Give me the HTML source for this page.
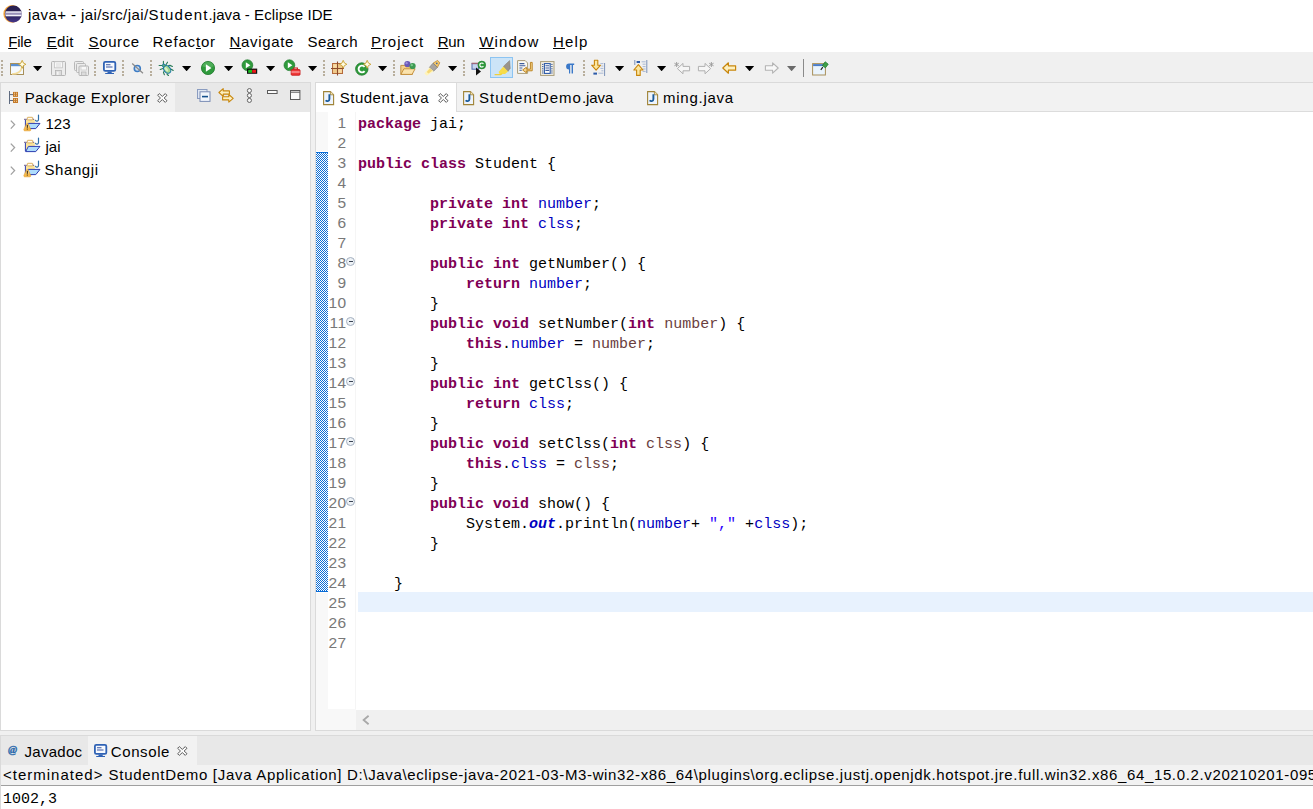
<!DOCTYPE html>
<html lang="en">
<head>
<meta charset="utf-8">
<title>java+ - jai/src/jai/Student.java - Eclipse IDE</title>
<style>
*{box-sizing:border-box;margin:0;padding:0}
html,body{width:1313px;height:809px;overflow:hidden;background:#f0f0f0}
body{position:relative;font-family:"Liberation Sans",sans-serif;font-size:15px;color:#000}
.abs{position:absolute}
.t{position:absolute;white-space:pre;line-height:20px;height:20px}
#title{left:0;top:0;width:1313px;height:29px;background:#fff}
#menu{left:0;top:29px;width:1313px;height:23px;background:#fff}
#menu .t u{text-decoration:underline;text-underline-offset:1px;text-decoration-thickness:1px}
#tool{left:0;top:52px;width:1313px;height:30px;background:#f0f0f0}
.sep{position:absolute;width:2px;height:16px;top:8px;background:repeating-linear-gradient(to bottom,#b8ae9c 0,#b8ae9c 2px,transparent 2px,transparent 3.5px)}
.dd{position:absolute;top:13.700px;margin-left:-.2px;width:9.600px;height:5.600px;background:#000;clip-path:polygon(0 0,100% 0,50% 100%)}
svg{position:absolute;overflow:visible}
/* panels */
#left{left:0;top:82px;width:311px;height:649px;background:#fff;border:1px solid #dadada}
.tr{line-height:23px!important;height:23px!important}
#left .hdr{left:0;top:0;width:309px;height:29px;background:#e8e8e8}
#left .hdr .act{left:0;top:0;width:174px;height:29px;background:#f2f2f2}
#ed{left:315px;top:82px;width:998px;height:649px;background:#fff;border:1px solid #dadada;border-right:0}
#ed .hdr{left:0;top:0;width:997px;height:29px;background:#f2f2f2;border-bottom:1px solid #dcdcdc}
#ed .hdr .act{left:0;top:0;width:141px;height:29px;background:#fff;border-right:1px solid #dcdcdc}
#ruler{left:0;top:29px;width:12px;height:618px;background:#f8f8f8}
#hatch{left:0;top:68px;width:12px;height:442px;background-color:#fff;background-image:conic-gradient(#0a6cd6 25%,#fff 0 50%,#0a6cd6 0 75%,#fff 0);background-size:2px 2px;background-position:0 1px;border-top:1px solid #fff;border-bottom:1px solid #fff;box-shadow:inset 0 1px 0 #0a6cd6,inset 0 -1px 0 #0a6cd6}
#lnsep{left:39px;top:29px;width:1px;height:598px;background:#f5f5f5}
#hscroll{left:40px;top:627px;width:957px;height:20px;background:#f0f0f0}
#lnbot{left:12px;top:626px;width:28px;height:21px;background:#f8f8f8}
#cur{left:42px;top:509px;width:955px;height:20px;background:#e8f2fe}
.code{font-family:"Liberation Mono",monospace;font-size:15px}
.ln{position:absolute;left:0;margin-top:1px;width:30.400px;text-align:right;color:#787878;font-family:"Liberation Sans",sans-serif;font-size:15.500px;letter-spacing:0.38px;line-height:20px;height:20px;white-space:pre}
.cl{position:absolute;left:42px;margin-top:3px;font-family:"Liberation Mono",monospace;font-size:15px;line-height:20px;height:20px;white-space:pre;color:#000}
.k{color:#7f0055;font-weight:bold}
.f{color:#0000c0}
.p{color:#6a3e3e}
.s{color:#2a00ff}
.sf{color:#0000c0;font-weight:bold;font-style:italic}
.fold{position:absolute;left:30px;margin-top:-1px;width:9px;height:9px;border:1px solid #a4b0c0;border-radius:50%;background:#eef2f6}
.fold:after{content:"";position:absolute;left:1.500px;top:3px;width:4px;height:1px;background:#3a4454}
#bot{left:0;top:735px;width:1313px;height:74px;background:#fff;border-top:1px solid #dadada;border-left:1px solid #dadada}
#bot .hdr{left:0;top:0;width:1312px;height:29px;background:#e8e8e8}
#bot .hdr .act{left:87px;top:0;width:109px;height:29px;background:#f2f2f2}
#bot .desc{left:0;top:29px;width:1312px;height:21px;background:#f2f2f2;border-bottom:1px solid #a0a0a0}
</style>
</head>
<body>
<!-- TITLE BAR -->
<div id="title" class="abs">
  <svg id="eclipse" style="left:3px;top:5px" width="19" height="18" viewBox="0 0 19 18"><defs><clipPath id="ec"><circle cx="10.300" cy="8.900" r="8.500"/></clipPath><linearGradient id="eg" x1="0" y1="0" x2="0" y2="1"><stop offset="0" stop-color="#2a2050"/><stop offset=".55" stop-color="#2c2258"/><stop offset="1" stop-color="#45378a"/></linearGradient></defs><circle cx="9.200" cy="8.900" r="8.800" fill="#f2a23a"/><circle cx="10.300" cy="8.900" r="8.500" fill="url(#eg)"/><g clip-path="url(#ec)"><rect x="2.500" y="6.300" width="17" height="5" fill="#f4f2fa"/><rect x="2.500" y="7.700" width="17" height="2.100" fill="#9890b8"/></g></svg>
  <div class="t" id="ttl" style="left:28.0px;top:5px;letter-spacing:0.42px">java+ - jai/src/jai/<span style="letter-spacing:1.19px">Student</span><span style="letter-spacing:0.06px">.java - </span><span style="letter-spacing:0.1px">Eclipse IDE</span></div>
</div>
<!-- MENU BAR -->
<div id="menu" class="abs">
  <div class="t" id="m1" style="left:8.2px;top:3px;letter-spacing:-0.20px"><u>F</u>ile</div>
  <div class="t" id="m2" style="left:46.8px;top:3px;letter-spacing:0.27px"><u>E</u>dit</div>
  <div class="t" id="m3" style="left:88.6px;top:3px;letter-spacing:0.60px"><u>S</u>ource</div>
  <div class="t" id="m4" style="left:152.6px;top:3px;letter-spacing:0.83px">Refac<u>t</u>or</div>
  <div class="t" id="m5" style="left:229.6px;top:3px;letter-spacing:0.66px"><u>N</u>avigate</div>
  <div class="t" id="m6" style="left:307.4px;top:3px;letter-spacing:0.52px">Se<u>a</u>rch</div>
  <div class="t" id="m7" style="left:371.0px;top:3px;letter-spacing:0.93px"><u>P</u>roject</div>
  <div class="t" id="m8" style="left:437.8px;top:3px;letter-spacing:-0.30px"><u>R</u>un</div>
  <div class="t" id="m9" style="left:479.2px;top:3px;letter-spacing:1.16px"><u>W</u>indow</div>
  <div class="t" id="m10" style="left:553.0px;top:3px;letter-spacing:1.14px"><u>H</u>elp</div>
</div>
<!-- TOOLBAR -->
<div id="tool" class="abs">
<!--TOOLICONS-->
  <div class="sep" style="left:1px"></div>
  <!-- new -->
  <svg style="left:10px;top:8px" width="16" height="16" viewBox="0 0 16 16"><rect x=".5" y="3.5" width="13" height="11" fill="#f4f9fe" stroke="#a8905a"/><rect x="1" y="4" width="12" height="2.2" fill="#5a8fd0"/><path d="M2 14c5 0 9-2 10-7" stroke="#f3dc9a" stroke-width="1.6" fill="none"/><path d="M12.200.3l1.200 2.700 2.500 1.300-2.500 1.300-1.200 2.700L11 5.600 8.500 4.300 11 3z" fill="#fffbe0" stroke="#c9a132" stroke-width=".9" stroke-linejoin="round"/></svg>
  <div class="dd" style="left:33px"></div>
  <!-- save -->
  <svg style="left:51px;top:9px" width="15" height="15" viewBox="0 0 15 15"><path d="M1.5.5h12a1 1 0 011 1v12a1 1 0 01-1 1h-12a1 1 0 01-1-1v-12a1 1 0 011-1z" fill="#ececec" stroke="#b4b4b4"/><rect x="3.5" y=".8" width="8" height="6" fill="#f8f8f8" stroke="#c4c4c4" stroke-width=".8"/><path d="M5 3h5M5 5h5" stroke="#d0d0d0" stroke-width=".8"/><rect x="4.5" y="9.5" width="6" height="5" fill="#dcdcdc" stroke="#b4b4b4" stroke-width=".8"/><rect x="6" y="10.8" width="1.6" height="3" fill="#f4f4f4"/></svg>
  <!-- save all -->
  <svg style="left:74px;top:9px" width="16" height="15" viewBox="0 0 16 15"><rect x=".5" y=".5" width="9" height="9" rx="1" fill="#ececec" stroke="#b8b8b8"/><rect x="2.5" y="2.5" width="9" height="9" rx="1" fill="#ececec" stroke="#b8b8b8"/><rect x="5" y="5" width="9.5" height="9.5" rx="1" fill="#ececec" stroke="#b4b4b4"/><rect x="7" y="5.4" width="5.6" height="3.6" fill="#f8f8f8" stroke="#c8c8c8" stroke-width=".7"/><rect x="7.6" y="11" width="4.4" height="3.4" fill="#dcdcdc" stroke="#b4b4b4" stroke-width=".7"/></svg>
  <div class="sep" style="left:94px"></div>
  <!-- console/monitor -->
  <svg style="left:103px;top:9px" width="14" height="14" viewBox="0 0 14 14"><rect x=".9" y=".9" width="11.4" height="9" rx="1.4" fill="#f6f9fe" stroke="#2f62b5" stroke-width="1.8"/><path d="M3 3.8h4.5M3 6h6.5" stroke="#3a56a0" stroke-width="1.1"/><path d="M4.5 10.5h4.2v1.4h2.3v1.2h-8.8v-1.2h2.3z" fill="#2f62b5"/></svg>
  <div class="sep" style="left:122px"></div>
  <!-- skip breakpoints -->
  <svg style="left:131px;top:10px" width="13" height="13" viewBox="0 0 13 13"><circle cx="6.3" cy="6.5" r="3" fill="#cfe0f3" stroke="#3d7cc4" stroke-width="1.6"/><path d="M1.2 1.5l10.8 9.7" stroke="#8a8a8a" stroke-width="1.2"/></svg>
  <div class="sep" style="left:150px"></div>
  <!-- debug bug -->
  <svg style="left:158px;top:8px" width="16" height="16" viewBox="0 0 16 16"><g stroke="#2a7a56" stroke-width="1.100" fill="none" stroke-linecap="round"><path d="M5.400 4V1.200M8 4.800l1.500-2.600M4.200 5.500H1.100M5 8.600L2.200 9.500M10.600 5.600l1.500-.2 2.300 1.100M12.100 9.400h1.400l1.700 1.100M6.100 11.200l-.6 1.400.9 2.100M9.100 13.200l.1 1.200 1.300 1.100"/></g><ellipse cx="9.100" cy="9.300" rx="3.100" ry="4.400" fill="#a4d68c" stroke="#1a7aa8" stroke-width="1.100" transform="rotate(-40 9.100 9.300)"/><ellipse cx="8.500" cy="8.700" rx="1.300" ry="2.600" fill="#d8f0c8" transform="rotate(-40 9.100 9.300)"/><circle cx="5.800" cy="5.600" r="1.500" fill="#6ab06a" stroke="#1a7aa8" stroke-width="1"/></svg>
  <div class="dd" style="left:182px"></div>
  <!-- run -->
  <svg style="left:201px;top:9px" width="14" height="14" viewBox="0 0 14 14"><circle cx="7" cy="7" r="6.6" fill="#2f9a3c" stroke="#1f7a2c" stroke-width=".8"/><path d="M7 .9a6.1 6.1 0 00-5.8 4.3c3 1.5 8.6 1.5 11.6 0A6.1 6.1 0 007 .9z" fill="#5db765" opacity=".7"/><path d="M4.9 3.3l5.6 3.7-5.6 3.7z" fill="#fff"/></svg>
  <div class="dd" style="left:224px"></div>
  <!-- coverage -->
  <svg style="left:241px;top:7px" width="17" height="16" viewBox="0 0 17 16"><circle cx="6.4" cy="6.2" r="5.4" fill="#2f9a3c" stroke="#1f7a2c" stroke-width=".7"/><path d="M4.8 3.2l4.6 3-4.6 3z" fill="#fff"/><rect x="6" y="9.6" width="10.2" height="5.2" fill="#111"/><rect x="7.2" y="10.8" width="3.8" height="3" fill="#18c020"/><rect x="11.2" y="10.8" width="3.8" height="3" fill="#e81818"/></svg>
  <div class="dd" style="left:266px"></div>
  <!-- external tools -->
  <svg style="left:283px;top:7px" width="18" height="17" viewBox="0 0 18 17"><circle cx="6.4" cy="6.2" r="5.4" fill="#2f9a3c" stroke="#1f7a2c" stroke-width=".7"/><path d="M4.8 3.2l4.6 3-4.6 3z" fill="#fff"/><rect x="8.2" y="10.6" width="8.8" height="5.6" rx=".8" fill="#f03a3a" stroke="#c81818" stroke-width=".9"/><path d="M10.8 10.4V9h3.6v1.4" fill="none" stroke="#c81818" stroke-width="1.1"/><path d="M8.4 13h8.4" stroke="#ffd0d0" stroke-width=".9"/></svg>
  <div class="dd" style="left:308px"></div>
  <div class="sep" style="left:323px"></div>
  <!-- new package -->
  <svg style="left:331px;top:8px" width="16" height="16" viewBox="0 0 16 16"><rect x="1.5" y="3.5" width="10" height="10" fill="#f0c98a" stroke="#b46a3c"/><path d="M6.5 1.5v14M0 8.5h13" stroke="#8c4a2a" stroke-width="1.1"/><rect x="2.4" y="4.4" width="3.3" height="3.3" fill="#f8dba6"/><rect x="7.4" y="9.4" width="3.3" height="3.3" fill="#f8dba6"/><path d="M12.200.3l1.200 2.700 2.500 1.300-2.500 1.300-1.200 2.700L11 5.600 8.500 4.300 11 3z" fill="#fffbe0" stroke="#c9a132" stroke-width=".9" stroke-linejoin="round"/></svg>
  <!-- new class -->
  <svg style="left:355px;top:8px" width="16" height="16" viewBox="0 0 16 16"><circle cx="6.8" cy="9" r="6.2" fill="#2f9a3c" stroke="#1f7a2c" stroke-width=".8"/><path d="M9.6 6.8A3.4 3.4 0 106.9 12.4a3.4 3.4 0 002.7-1.3" fill="none" stroke="#fff" stroke-width="1.9"/><path d="M12.200.3l1.200 2.700 2.500 1.300-2.500 1.300-1.200 2.700L11 5.600 8.500 4.300 11 3z" fill="#fffbe0" stroke="#c9a132" stroke-width=".9" stroke-linejoin="round"/></svg>
  <div class="dd" style="left:378px"></div>
  <div class="sep" style="left:393px"></div>
  <!-- open type -->
  <svg style="left:400px;top:8px" width="17" height="16" viewBox="0 0 17 16"><path d="M.8 5.4h4l1.2 1.4h6.4v7.6H.8z" fill="#f5d08a" stroke="#c08a36" stroke-width=".9"/><path d="M.9 14.4l3-5.6h11.2l-3 5.6z" fill="#fbe3ac" stroke="#c08a36" stroke-width=".9"/><circle cx="7.4" cy="4" r="3.1" fill="#6a58b8"/><circle cx="6.6" cy="3.1" r="1.2" fill="#9c8edc"/><circle cx="12.6" cy="6" r="3.1" fill="#3d9a52"/><circle cx="11.8" cy="5.1" r="1.2" fill="#7cc88c"/></svg>
  <!-- search torch -->
  <svg style="left:424px;top:8px" width="16" height="16" viewBox="0 0 16 16"><path d="M9 3.200L13.600.4l2.200 2.400-2.400 4.600z" fill="#f2c76a" stroke="#c08a36" stroke-width=".8"/><circle cx="12.800" cy="3.400" r=".8" fill="#3a62a8"/><path d="M5.400 7.400l3.600-4.200 4.400 4.200-3.800 3.800z" fill="#a8a4a0" stroke="#807c78" stroke-width=".7"/><path d="M.4 13.600l5-6.200 4.200 3.800-6.800 4.600z" fill="#fff4bc"/><path d="M2.800 12l3.200-3.800 2.600 2.400-4.200 3z" fill="#f6d878"/></svg>
  <div class="dd" style="left:448px"></div>
  <div class="sep" style="left:463px"></div>
  <!-- toggle breadcrumb -->
  <svg style="left:471px;top:8px" width="16" height="16" viewBox="0 0 16 16"><rect x="1" y="3.6" width="6.6" height="5.6" fill="#c6d4ee" stroke="#5068a8" stroke-width="1"/><path d="M.6 3.4h7.4" stroke="#a06878" stroke-width="1.4"/><path d="M5 7.6l5 4-5 4z" fill="#111"/><circle cx="10.8" cy="5" r="3.9" fill="#2f9a3c" stroke="#1f7a2c" stroke-width=".6"/><path d="M12.4 3.8a2 2 0 100 2.4" fill="none" stroke="#fff" stroke-width="1.1"/></svg>
  <!-- mark occurrences (toggled) -->
  <div class="abs" style="left:490px;top:5px;width:23px;height:21px;background:#cce4f7;border:1px solid #8cc4f2"></div>
  <svg style="left:494px;top:8px" width="17" height="16" viewBox="0 0 17 16"><path d="M9.4 6.4L15.6.6l.6 7.6-2.2 3.2z" fill="#9a948a" stroke="#7c766c" stroke-width=".5"/><path d="M4.6 12l4.8-5.6 4.6 5-3 2.6H5.6z" fill="#f7dc4a"/><path d="M.6 14.6h6l1.4-.8" stroke="#f0cf3a" stroke-width="1.2" fill="none"/></svg>
  <!-- word wrap -->
  <svg style="left:517px;top:8px" width="16" height="15" viewBox="0 0 16 15"><path d="M.6.6h7.6l2.4 2.4v10.4H.6z" fill="#fbfaf4" stroke="#a89c78" stroke-width="1"/><path d="M2.4 3.6h5M2.4 5.8h6M2.4 8h3M2.4 10.2h2.4" stroke="#3c5c9c" stroke-width="1.1"/><path d="M13.4 2.4v6.8H9.4V7.2L5.6 10l3.8 2.8v-2h5.8V2.4z" fill="#f6d892" stroke="#b87c14" stroke-width=".9"/></svg>
  <!-- block selection -->
  <svg style="left:540px;top:9px" width="15" height="15" viewBox="0 0 15 15"><rect x=".6" y=".6" width="13.4" height="13.8" fill="#f6f2e6" stroke="#a89c78" stroke-width="1"/><rect x="4.4" y="2.6" width="5.8" height="9.8" fill="#fff" stroke="#2c5aa8" stroke-width="1.1"/><path d="M2 3.4h1.4M2 5.6h1.4M2 7.8h1.4M2 10h1.4M2 12h1.4M11.2 3.4h1.4M11.2 5.6h1.4M11.2 7.8h1.4M11.2 10h1.4M11.2 12h1.4" stroke="#3c5c9c" stroke-width="1"/><path d="M5.4 4.8h3.8M5.4 7h3.8M5.4 9.4h3.8" stroke="#3c5c9c" stroke-width="1.1"/></svg>
  <!-- pilcrow -->
  <svg style="left:565px;top:11px" width="10" height="11" viewBox="0 0 10 11"><path d="M4 6.4A2.9 2.9 0 014 .6h5.2v1.4H8v8.6H6.6V2H5.2v8.6H4z" fill="#3a78c8"/></svg>
  <div class="sep" style="left:583px"></div>
  <!-- next annotation -->
  <svg style="left:591px;top:7px" width="16" height="18" viewBox="0 0 16 18"><path d="M13.6 4v13" stroke="#7c92b8" stroke-width="1"/><path d="M9.4 4.6h3M10.4 7h2M9.4 9.400h3M10.400 11.800h2M7.400 14.200h5" stroke="#a8b8d4" stroke-width="1"/><rect x="2.400" y="13.600" width="3.600" height="2" fill="#2c5aa8"/><path d="M3.400 1.200h3.400v5h2.800L5.100 11.200.6 6.200h2.800z" fill="#fbe6a0" stroke="#c8860c" stroke-width="1.1" stroke-linejoin="round"/></svg>
  <div class="dd" style="left:615px"></div>
  <!-- prev annotation -->
  <svg style="left:633px;top:7px" width="16" height="18" viewBox="0 0 16 18"><path d="M1.800 1v5M13.800 1v13" stroke="#7c92b8" stroke-width="1"/><rect x="3.600" y="2" width="3.400" height="2" fill="#2c5aa8"/><path d="M8.600 2.800h4M9.600 5.200h3M9.600 7.600h3M9.600 10h3M9.600 12.400h3" stroke="#a8b8d4" stroke-width="1"/><path d="M3.600 16.400h3.600v-5.400h2.800L5.400 5.600.8 11h2.800z" fill="#fbe6a0" stroke="#c8860c" stroke-width="1.100" stroke-linejoin="round"/></svg>
  <div class="dd" style="left:657px"></div>
  <!-- last edit (disabled) -->
  <svg style="left:674px;top:9px" width="17" height="14" viewBox="0 0 17 14"><path d="M2.600 1v5M.4 2.200l4.400 2.600M4.800 2.200L.4 4.800" stroke="#9a9a9a" stroke-width=".9"/><path d="M9 2.400v3h6.600v4.400H9v3L3.400 7.600z" fill="#f6f6f6" stroke="#b0b0b0" stroke-width="1" stroke-linejoin="round"/></svg>
  <!-- next edit (disabled) -->
  <svg style="left:697px;top:9px" width="17" height="14" viewBox="0 0 17 14"><path d="M14.400 1v5M12.200 2.200l4.400 2.600M16.600 2.200l-4.400 2.600" stroke="#9a9a9a" stroke-width=".9"/><path d="M8 2.400v3H1.400v4.400H8v3l5.600-5.200z" fill="#f6f6f6" stroke="#b0b0b0" stroke-width="1" stroke-linejoin="round"/></svg>
  <!-- back -->
  <svg style="left:722px;top:10px" width="15" height="12" viewBox="0 0 15 12"><path d="M6.400.8v3h7.200v4.400H6.400v3L.8 6z" fill="#fdf0c0" stroke="#c8860c" stroke-width="1.200" stroke-linejoin="round"/></svg>
  <div class="dd" style="left:745px"></div>
  <!-- forward disabled -->
  <svg style="left:764px;top:10px" width="15" height="12" viewBox="0 0 15 12"><path d="M8.600.8v3H1.400v4.400h7.200v3L14.200 6z" fill="#f8f8f8" stroke="#b4b4b4" stroke-width="1.100" stroke-linejoin="round"/></svg>
  <div class="dd" style="left:787px;background:#6a6a6a"></div>
  <div class="abs" style="left:803px;top:7px;width:1px;height:18px;background:#8a8a8a"></div>
  <!-- pin editor -->
  <svg style="left:812px;top:9px" width="17" height="15" viewBox="0 0 17 15"><rect x=".6" y="2.600" width="12.800" height="11.400" fill="#eaf4fd" stroke="#a8905a" stroke-width="1"/><rect x="1.100" y="3.100" width="11.800" height="2" fill="#4a7cc8"/><path d="M8.800 8.800l2-2.600" stroke="#222" stroke-width="1.200"/><path d="M10.400 4.600L13.200.8l3 2.400-2.800 3.600z" fill="#3fa048" stroke="#1f7a2c" stroke-width=".8"/></svg>
</div>
<!-- LEFT PANEL -->
<div id="left" class="abs">
  <div class="hdr abs"><div class="act abs"></div>
    <div class="t" id="pe" style="left:23.7px;top:5px;letter-spacing:0.44px">Package Explorer</div>
<!--LEFTHDRICONS-->
    <svg style="left:8px;top:8px" width="10" height="13" viewBox="0 0 10 13"><path d="M.5 0v13M.5 3.600h4M.5 9.500h4" stroke="#5f6b80" stroke-width="1" fill="none"/><rect x="4" y=".9" width="5" height="5" fill="#c47a2a"/><rect x="4" y="7" width="5" height="5" fill="#c47a2a"/><path d="M5 2.200h1M7 2.200h1M5 4.200h1M7 4.200h1M5 8.300h1M7 8.300h1M5 10.300h1M7 10.300h1" stroke="#f4d8a8" stroke-width="1"/></svg>
    <svg style="left:156px;top:10px" width="11" height="10" viewBox="0 0 11 10"><path d="M.6 2.300L2.300.6l3 2.800 3-2.800L10 2.300 7.100 5 10 7.700 8.300 9.400l-3-2.800-3 2.800L.6 7.700 3.500 5z" fill="#fdfdfd" stroke="#555" stroke-width=".95" stroke-linejoin="round"/></svg>
    <svg style="left:196px;top:6px" width="14" height="13" viewBox="0 0 14 13"><rect x=".5" y=".5" width="9.500" height="9" fill="#dfe6f2" stroke="#8a9cc0" stroke-width="1"/><rect x="3" y="2.800" width="10" height="9.600" fill="#f2f6fc" stroke="#7a8cb4" stroke-width="1"/><path d="M5 7.600h6" stroke="#14508c" stroke-width="1.600"/></svg>
    <svg style="left:217px;top:5px" width="16" height="15" viewBox="0 0 16 15"><path d="M5.200.7v2.200h6.200v3.200H5.200v2.200L.9 4.500z" fill="#fdf0c0" stroke="#c8860c" stroke-width="1.100" stroke-linejoin="round"/><path d="M10.800 6.500v2.200H4.600v3.200h6.200v2.200l4.400-3.800z" fill="#fdf0c0" stroke="#c8860c" stroke-width="1.100" stroke-linejoin="round"/></svg>
    <svg style="left:245px;top:5px" width="7" height="15" viewBox="0 0 7 15"><g fill="#f8f8f8" stroke="#555" stroke-width=".9"><circle cx="3.400" cy="2.600" r="2.050"/><circle cx="3.400" cy="7.500" r="2.050"/><circle cx="3.400" cy="12.400" r="2.050"/></g></svg>
    <svg style="left:266px;top:7px" width="11" height="4" viewBox="0 0 11 4"><rect x=".5" y=".5" width="9.600" height="3" fill="#fbfbfb" stroke="#5a5a5a" stroke-width="1"/></svg>
    <svg style="left:289px;top:7px" width="11" height="10" viewBox="0 0 11 10"><rect x=".5" y=".5" width="9.400" height="9" fill="#fbfbfb" stroke="#5a5a5a" stroke-width="1"/><path d="M.5 2.200h9.400" stroke="#5a5a5a" stroke-width="1"/></svg>
  </div>
<!--TREE-->
  <svg style="left:8.500px;top:37px" width="6" height="10" viewBox="0 0 6 10"><path d="M.8.600l3.800 4-3.800 4" fill="none" stroke="#a0a0a0" stroke-width="1.300"/></svg><svg style="left:22px;top:31px" width="18" height="18" viewBox="0 0 18 18"><path d="M2.600 5.600h9.200V9H5.400L3 13.800h-.4z" fill="#fbe49a"/><rect x="4.300" y="3.300" width="5.400" height="2.600" rx=".5" fill="#fffaf0" stroke="#d8a850" stroke-width=".9"/><path d="M1 5.300h2.800M9.900 5.300h1.200" stroke="#6a5a8a" stroke-width="1"/><path d="M2.400 6v8.300" stroke="#2c3cb0" stroke-width="1"/><path d="M5.400 9.400H17l-4.200 5.200H2.700z" fill="#aedcfc" stroke="#2c3cb0" stroke-width="1" stroke-linejoin="round"/><path d="M15.500 1v4.400c0 2-2.300 2.300-3 .9" fill="none" stroke="#2f6fa8" stroke-width="1.200" stroke-linecap="round"/><path d="M4.300 9.400c.5 0 .8.300 1 .8l2.400 5.200c.3.800-.2 1.400-1 1.400H1.900c-.8 0-1.300-.6-1-1.400l2.400-5.200c.2-.5.500-.8 1-.8z" fill="#f4b84a" stroke="#e09a28" stroke-width=".6"/><path d="M4.300 10.200c.3 0 .5.200.6.500l1.200 2.800H2.500l1.200-2.800c.1-.3.300-.5.600-.5z" fill="#fbd88a"/><path d="M4.300 10.800v3M4.300 14.600v.9" stroke="#2a1a08" stroke-width="1"/></svg>
  <svg style="left:8.500px;top:60px" width="6" height="10" viewBox="0 0 6 10"><path d="M.8.600l3.800 4-3.800 4" fill="none" stroke="#a0a0a0" stroke-width="1.300"/></svg><svg style="left:22px;top:54px" width="18" height="18" viewBox="0 0 18 18"><path d="M2.600 5.600h9.200V9H5.400L3 13.800h-.4z" fill="#fbe49a"/><rect x="4.300" y="3.300" width="5.400" height="2.600" rx=".5" fill="#fffaf0" stroke="#d8a850" stroke-width=".9"/><path d="M1 5.300h2.800M9.900 5.300h1.200" stroke="#6a5a8a" stroke-width="1"/><path d="M2.400 6v8.300" stroke="#2c3cb0" stroke-width="1"/><path d="M5.400 9.400H17l-4.200 5.200H2.700z" fill="#aedcfc" stroke="#2c3cb0" stroke-width="1" stroke-linejoin="round"/><path d="M15.500 1v4.400c0 2-2.300 2.300-3 .9" fill="none" stroke="#2f6fa8" stroke-width="1.200" stroke-linecap="round"/></svg>
  <svg style="left:8.500px;top:83px" width="6" height="10" viewBox="0 0 6 10"><path d="M.8.600l3.800 4-3.800 4" fill="none" stroke="#a0a0a0" stroke-width="1.300"/></svg><svg style="left:22px;top:77px" width="18" height="18" viewBox="0 0 18 18"><path d="M2.600 5.600h9.200V9H5.400L3 13.800h-.4z" fill="#fbe49a"/><rect x="4.300" y="3.300" width="5.400" height="2.600" rx=".5" fill="#fffaf0" stroke="#d8a850" stroke-width=".9"/><path d="M1 5.300h2.800M9.900 5.300h1.200" stroke="#6a5a8a" stroke-width="1"/><path d="M2.400 6v8.300" stroke="#2c3cb0" stroke-width="1"/><path d="M5.400 9.400H17l-4.200 5.200H2.700z" fill="#aedcfc" stroke="#2c3cb0" stroke-width="1" stroke-linejoin="round"/><path d="M15.500 1v4.400c0 2-2.300 2.300-3 .9" fill="none" stroke="#2f6fa8" stroke-width="1.200" stroke-linecap="round"/><path d="M4.300 9.400c.5 0 .8.300 1 .8l2.400 5.200c.3.800-.2 1.400-1 1.400H1.900c-.8 0-1.300-.6-1-1.400l2.400-5.200c.2-.5.500-.8 1-.8z" fill="#f4b84a" stroke="#e09a28" stroke-width=".6"/><path d="M4.300 10.200c.3 0 .5.200.6.500l1.200 2.800H2.500l1.200-2.800c.1-.3.300-.5.600-.5z" fill="#fbd88a"/><path d="M4.300 10.800v3M4.300 14.600v.9" stroke="#2a1a08" stroke-width="1"/></svg>
  <div class="t tr" id="tr1" style="left:44.4px;top:29px;letter-spacing:0.10px">123</div>
  <div class="t tr" id="tr2" style="left:44.4px;top:52px;letter-spacing:0.10px">jai</div>
  <div class="t tr" id="tr3" style="left:43.4px;top:75px;letter-spacing:0.60px">Shangji</div>
</div>
<!-- EDITOR -->
<div id="ed" class="abs">
  <div class="hdr abs"><div class="act abs"></div>
    <div class="t" id="tab1" style="left:23.8px;top:5px;letter-spacing:0.49px">Student.java</div>
    <div class="t" id="tab2" style="left:163.0px;top:5px;letter-spacing:1.04px">Student<span style="letter-spacing:0.97px">Demo</span><span style="letter-spacing:-0.09px">.java</span></div>
    <div class="t" id="tab3" style="left:347.0px;top:5px;letter-spacing:0.75px">ming.java</div>
<!--EDHDRICONS-->
    <svg style="left:6.5px;top:7.5px" width="12" height="15" viewBox="0 0 12 15"><path d="M.6.600h6.800l3.200 3.200v9.800H.6z" fill="#eef4fc" stroke="#a08438" stroke-width="1.100"/><path d="M7.400.6v3.200h3.200" fill="#f6e2b0" stroke="#a08438" stroke-width=".8"/><path d="M2.800 9.200c.7 1.300 3.600 1.500 3.600-1.300V3.200" fill="none" stroke="#1a5a9a" stroke-width="1.900"/></svg>
    <svg style="left:122px;top:10px" width="11" height="10" viewBox="0 0 11 10"><path d="M.6 2.300L2.300.6l3 2.800 3-2.800L10 2.300 7.100 5 10 7.700 8.300 9.400l-3-2.800-3 2.800L.6 7.700 3.500 5z" fill="#fdfdfd" stroke="#555" stroke-width=".95" stroke-linejoin="round"/></svg>
    <svg style="left:147px;top:7.5px" width="12" height="15" viewBox="0 0 12 15"><path d="M.6.600h6.800l3.200 3.200v9.800H.6z" fill="#eef4fc" stroke="#a08438" stroke-width="1.100"/><path d="M7.400.6v3.200h3.200" fill="#f6e2b0" stroke="#a08438" stroke-width=".8"/><path d="M2.800 9.200c.7 1.300 3.600 1.500 3.600-1.300V3.200" fill="none" stroke="#1a5a9a" stroke-width="1.900"/></svg>
    <svg style="left:331px;top:7.5px" width="12" height="15" viewBox="0 0 12 15"><path d="M.6.600h6.800l3.200 3.200v9.800H.6z" fill="#eef4fc" stroke="#a08438" stroke-width="1.100"/><path d="M7.400.6v3.200h3.200" fill="#f6e2b0" stroke="#a08438" stroke-width=".8"/><path d="M2.800 9.200c.7 1.300 3.600 1.500 3.600-1.300V3.200" fill="none" stroke="#1a5a9a" stroke-width="1.900"/></svg>
  </div>
  <div id="ruler" class="abs"></div>
  <div id="hatch" class="abs"></div>
  <div id="lnsep" class="abs"></div>
  <div id="cur" class="abs"></div>
  <div id="lnbot" class="abs"></div>
  <div id="hscroll" class="abs"><svg style="left:6px;top:5px" width="8" height="10" viewBox="0 0 8 10"><path d="M6.600.7L1.600 5l5 4.300" fill="none" stroke="#a8a8a8" stroke-width="1.800"/></svg></div>
<!--CODE-->
  <div class="ln" style="top:29px">1</div><div class="cl" style="top:29px"><span class="k">package</span> jai;</div>
  <div class="ln" style="top:49px">2</div>
  <div class="ln" style="top:69px">3</div><div class="cl" style="top:69px"><span class="k">public</span> <span class="k">class</span> Student {</div>
  <div class="ln" style="top:89px">4</div>
  <div class="ln" style="top:109px">5</div><div class="cl" style="top:109px">        <span class="k">private</span> <span class="k">int</span> <span class="f">number</span>;</div>
  <div class="ln" style="top:129px">6</div><div class="cl" style="top:129px">        <span class="k">private</span> <span class="k">int</span> <span class="f">clss</span>;</div>
  <div class="ln" style="top:149px">7</div>
  <div class="ln" style="top:169px">8</div><div class="fold" style="top:175px"></div><div class="cl" style="top:169px">        <span class="k">public</span> <span class="k">int</span> getNumber() {</div>
  <div class="ln" style="top:189px">9</div><div class="cl" style="top:189px">            <span class="k">return</span> <span class="f">number</span>;</div>
  <div class="ln" style="top:209px">10</div><div class="cl" style="top:209px">        }</div>
  <div class="ln" style="top:229px">11</div><div class="fold" style="top:235px"></div><div class="cl" style="top:229px">        <span class="k">public</span> <span class="k">void</span> setNumber(<span class="k">int</span> <span class="p">number</span>) {</div>
  <div class="ln" style="top:249px">12</div><div class="cl" style="top:249px">            <span class="k">this</span>.<span class="f">number</span> = <span class="p">number</span>;</div>
  <div class="ln" style="top:269px">13</div><div class="cl" style="top:269px">        }</div>
  <div class="ln" style="top:289px">14</div><div class="fold" style="top:295px"></div><div class="cl" style="top:289px">        <span class="k">public</span> <span class="k">int</span> getClss() {</div>
  <div class="ln" style="top:309px">15</div><div class="cl" style="top:309px">            <span class="k">return</span> <span class="f">clss</span>;</div>
  <div class="ln" style="top:329px">16</div><div class="cl" style="top:329px">        }</div>
  <div class="ln" style="top:349px">17</div><div class="fold" style="top:355px"></div><div class="cl" style="top:349px">        <span class="k">public</span> <span class="k">void</span> setClss(<span class="k">int</span> <span class="p">clss</span>) {</div>
  <div class="ln" style="top:369px">18</div><div class="cl" style="top:369px">            <span class="k">this</span>.<span class="f">clss</span> = <span class="p">clss</span>;</div>
  <div class="ln" style="top:389px">19</div><div class="cl" style="top:389px">        }</div>
  <div class="ln" style="top:409px">20</div><div class="fold" style="top:415px"></div><div class="cl" style="top:409px">        <span class="k">public</span> <span class="k">void</span> show() {</div>
  <div class="ln" style="top:429px">21</div><div class="cl" style="top:429px">            System.<span class="sf">out</span>.println(<span class="f">number</span>+ <span class="s">","</span> +<span class="f">clss</span>);</div>
  <div class="ln" style="top:449px">22</div><div class="cl" style="top:449px">        }</div>
  <div class="ln" style="top:469px">23</div>
  <div class="ln" style="top:489px">24</div><div class="cl" style="top:489px">    }</div>
  <div class="ln" style="top:509px">25</div>
  <div class="ln" style="top:529px">26</div>
  <div class="ln" style="top:549px">27</div>
</div>
<!-- BOTTOM PANEL -->
<div id="bot" class="abs">
  <div class="hdr abs"><div class="act abs"></div>
    <div class="t" id="jd" style="left:23.6px;top:6px;letter-spacing:0.26px">Javadoc</div>
    <div class="t" id="co" style="left:109.8px;top:6px;letter-spacing:0.60px">Console</div>
<!--BOTHDRICONS-->
    <div class="t" id="at" style="left:7px;top:3px;font-family:'Liberation Serif',serif;font-style:italic;font-weight:bold;font-size:11px;color:#2a68ac;-webkit-text-stroke:.3px #2a68ac">@</div>
    <svg style="left:93px;top:8px" width="14" height="14" viewBox="0 0 14 14"><rect x=".9" y=".9" width="11.400" height="9" rx="1.400" fill="#f6f9fe" stroke="#2f62b5" stroke-width="1.800"/><path d="M3 3.800h4.500M3 6h6.500" stroke="#3a56a0" stroke-width="1.100"/><path d="M4.500 10.500h4.200v1.400h2.300v1.200h-8.800v-1.200h2.300z" fill="#2f62b5"/></svg>
    <svg style="left:176px;top:10px" width="11" height="10" viewBox="0 0 11 10"><path d="M.6 2.300L2.300.6l3 2.800 3-2.800L10 2.300 7.100 5 10 7.700 8.300 9.400l-3-2.800-3 2.800L.6 7.700 3.500 5z" fill="#fdfdfd" stroke="#555" stroke-width=".95" stroke-linejoin="round"/></svg>
  </div>
  <div class="desc abs"><div class="t" id="term" style="left:2px;top:0px"><span style="letter-spacing:1px">&lt;terminated&gt; </span><span style="letter-spacing:0.7px">StudentDemo [Java Application] </span><span style="letter-spacing:0.64px">D:\Java\eclipse-java-2021-03-M3-win32-x86_64\plugins\org.eclipse.justj.openjdk.hotspot.jre.full.win32.x86_64_15.0.2.v20210201-0955\jre\bin\javaw.exe</span></div></div>
  <div class="t code" id="out" style="left:2px;top:54px">1002,3</div>
</div>
</body>
</html>
